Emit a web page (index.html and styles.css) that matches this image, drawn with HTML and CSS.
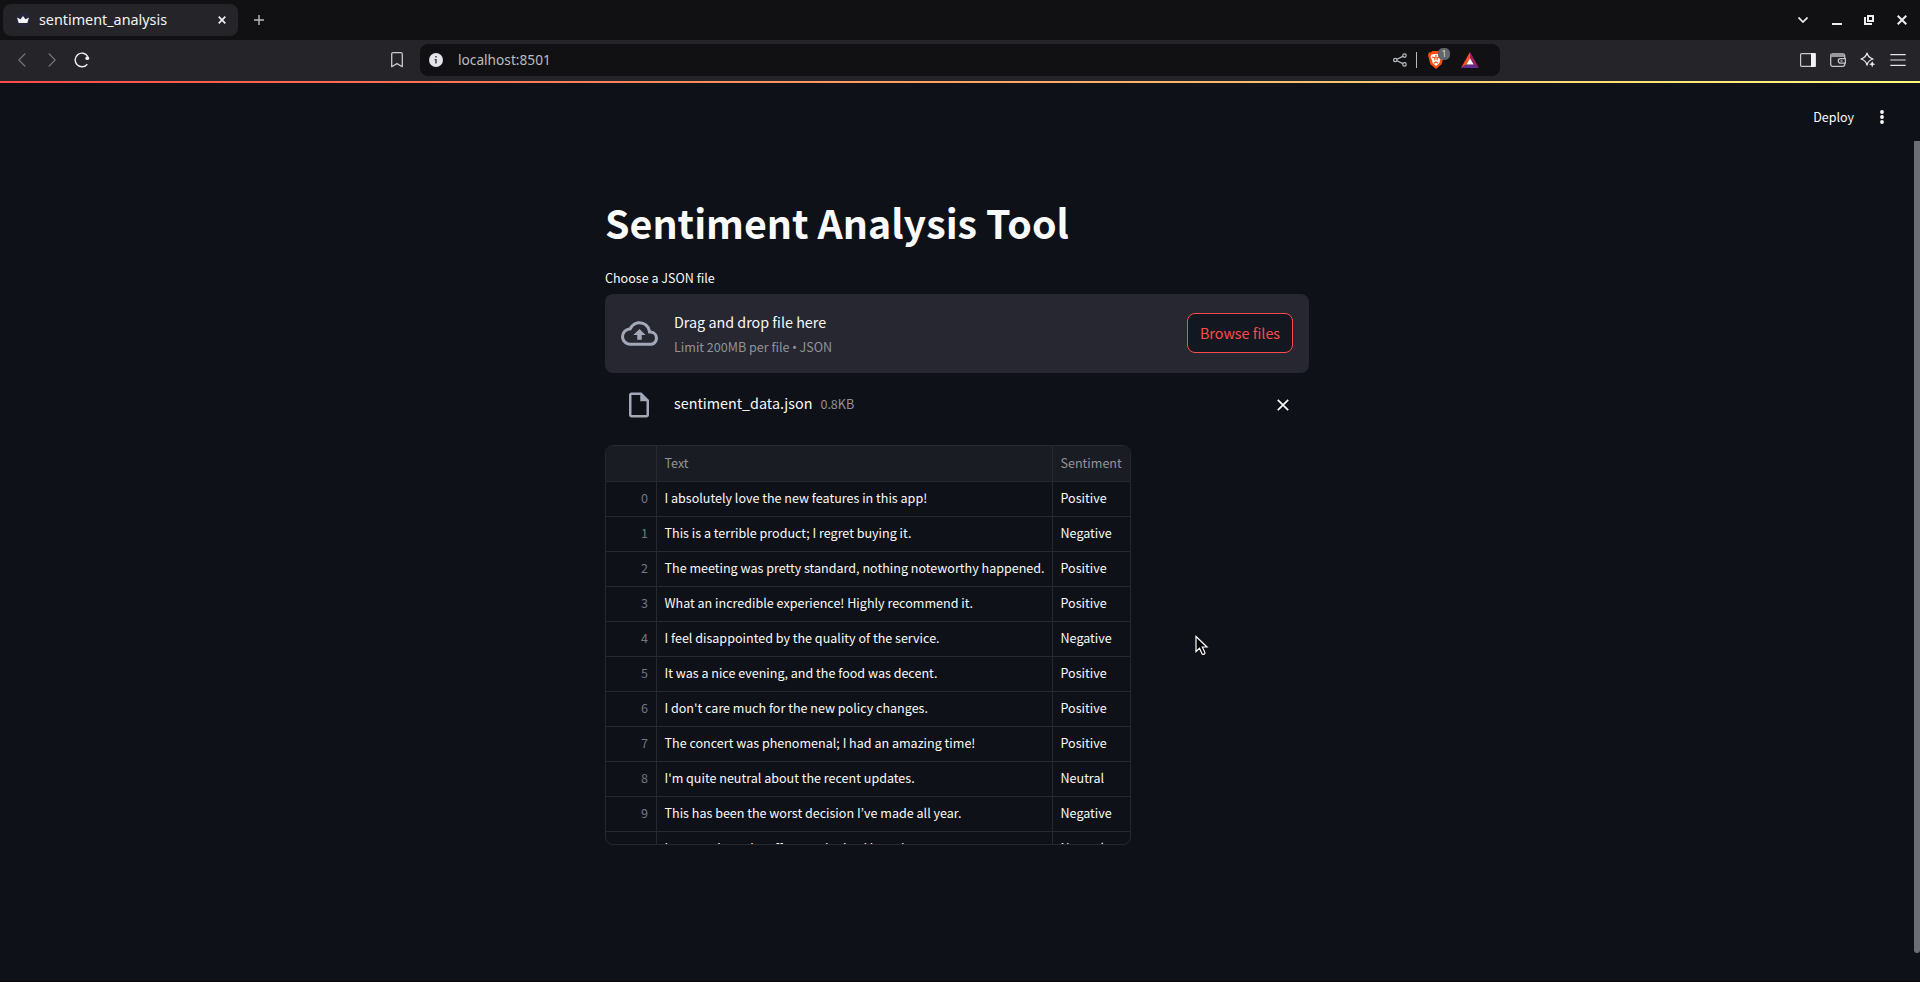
FILE: index.html
```html
<!DOCTYPE html>
<html lang="en">
<head>
<meta charset="utf-8">
<title>sentiment_analysis</title>
<link rel="stylesheet" href="styles.css">
</head>
<body>
<header class="tabstrip">
  <div class="tab">
    <svg class="tab-icon" width="16" height="16" viewBox="0 0 16 16"><circle cx="8" cy="8" r="7.500" fill="#25263a"/><path d="M2 5.500l3.500 1.700L8 4l2.500 3.200L14 5.500 12.300 11H3.700z" fill="#f4f4f4"/></svg>
    <span class="tab-title">sentiment_analysis</span>
    <svg width="8" height="8" viewBox="0 0 8 8" stroke="#eee" stroke-width="1.700"><path d="M.7.7l6.600 6.600M7.300.7L.7 7.300"/></svg>
  </div>
  <svg class="plus" width="10" height="10" viewBox="0 0 10 10" stroke="#bbb" stroke-width="1.400"><path d="M5 0v10M0 5h10"/></svg>
  <div class="window-controls">
    <svg width="10" height="6" viewBox="0 0 10 6" fill="none" stroke="#eee" stroke-width="1.700"><path d="M.5.5L5 5l4.500-4.500"/></svg>
    <svg class="minimize" width="10" height="10" viewBox="0 0 10 10" fill="#eee"><path d="M0 8h10v2H0z"/></svg>
    <svg width="10" height="10" viewBox="0 0 10 10" fill="none" stroke="#eee" stroke-width="2"><path d="M4 1h5v5H4zM1 2v7h7"/></svg>
    <svg width="10" height="10" viewBox="0 0 10 10" stroke="#eee" stroke-width="2"><path d="M.7.7l8.600 8.600M9.300.7L.7 9.300"/></svg>
  </div>
</header>
<nav class="toolbar">
  <div class="nav-buttons">
    <svg width="8" height="14" viewBox="0 0 8 14" fill="none" stroke="#74747a" stroke-width="1.200"><path d="M7.300.5L.8 7l6.500 6.500"/></svg>
    <svg class="forward" width="8" height="14" viewBox="0 0 8 14" fill="none" stroke="#74747a" stroke-width="1.200"><path d="M.7.5L7.200 7 .7 13.500"/></svg>
    <svg width="16" height="16" viewBox="0 0 16 16" fill="none" stroke="#f0f0f2" stroke-width="1.400"><path d="M13.300 12.200A6.800 6.800 0 1 1 13.800 4.500"/><circle cx="13.300" cy="6.200" r="1.900" fill="#f0f0f2" stroke="none"/></svg>
  </div>
  <svg class="bookmark" width="12" height="16" viewBox="0 0 12 16" fill="none" stroke="#c9c9cd" stroke-width="1.300"><path d="M.7 2.200Q.7.7 2.200.7h7.600q1.500 0 1.500 1.500v12.500L6 11.600.7 14.700z" stroke-linejoin="round"/></svg>
  <div class="address">
    <svg width="14" height="14" viewBox="0 0 14 14"><circle cx="7" cy="7" r="7" fill="#e4e4ea"/><path d="M6.200 3h1.600v1.600H6.200zM5.500 6h2.300v4.500H6.200V7.200h-.7z" fill="#4a4a52"/></svg>
    <span class="url">localhost:8501</span>
    <div class="address-actions">
      <svg width="14" height="14" viewBox="0 0 14 14" fill="none" stroke="#b9bdc2" stroke-width="1.200"><circle cx="2.300" cy="7" r="1.700"/><circle cx="11.500" cy="2.600" r="1.700"/><circle cx="11.500" cy="11.400" r="1.700"/><path d="M3.900 6.300l6-2.900M3.900 7.700l6 2.900"/></svg>
      <i class="divider"></i>
      <div class="shield">
        <svg width="16" height="18" viewBox="0 0 16 18"><path d="M4 0h8l1 1.500 2-.2 1 3-.8 3-1.600 6L8 18l-5.600-4.700-1.600-6L0 4.300l1-3 2 .2z" fill="#fb4d0d"/><path d="M3.500 3.500L8 3l4.500.5 1 2.500-1.500 3-.6 3L8 15l-3.400-3L4 9 2.500 6z" fill="#fff"/><path d="M4 6l2.600.8.4 2.400M12 6l-2.600.8L9 9.200M8 4v3M5.800 12.200L8 11l2.200 1.200" stroke="#fb4d0d" stroke-width="1.200" fill="none"/></svg>
        <span class="shield-count">1</span>
      </div>
      <svg width="18" height="16" viewBox="0 0 18 16"><path d="M9 0v6.200L5.300 12.500 0 16z" fill="#ff4f24"/><path d="M9 0l9 16-5.300-3.500L9 6.200z" fill="#9e1f63"/><path d="M0 16l5.300-3.500h7.400L18 16z" fill="#662d91"/><path d="M9 6.200l3.700 6.300H5.300z" fill="#fff"/></svg>
    </div>
  </div>
  <div class="toolbar-actions">
    <svg width="16" height="14" viewBox="0 0 16 14"><rect x=".6" y=".6" width="14.800" height="12.800" rx="1" fill="none" stroke="#c8c8cc" stroke-width="1.200"/><path d="M11 0h4.500v14H11z" fill="#f2f2f6"/></svg>
    <svg width="16" height="14" viewBox="0 0 16 14" fill="none" stroke="#c4c4c7" stroke-width="1.300"><rect x=".7" y=".8" width="14" height="12.500" rx="2"/><path d="M1 1.300h12.500v2H1z" fill="#999" stroke="#999"/><path d="M15.400 5.700h-4.900a2.200 2.200 0 0 0 0 4.400h4.900z" fill="#252529"/><path d="M10.500 8h2"/></svg>
    <svg width="16" height="16" viewBox="0 0 16 16"><path d="M7 1.200c.9 3.500 2.200 4.700 6 5.800-3.800 1.100-5.100 2.300-6 6-.9-3.700-2.200-4.900-6-6 3.800-1.100 5.100-2.300 6-5.800z" fill="none" stroke="#eee" stroke-width="1.300" stroke-linejoin="round"/><path d="M12.200 9l.9 2.300 2.300.9-2.300.9-.9 2.400-.9-2.400-2.300-.9 2.300-.9z" fill="#eee"/></svg>
    <svg width="16" height="12" viewBox="0 0 16 12" fill="#e4e4e6"><path d="M.3 0h15.400v1.200H.3zM.3 5.400h15.400v1.200H.3zM.3 10.800h15.400V12H.3z"/></svg>
  </div>
</nav>
<div class="rainbow"></div>
<div class="app">
  <div class="app-header">
    <span class="deploy">Deploy</span>
    <svg width="4" height="14" viewBox="0 0 4 14" fill="#fafafa"><circle cx="2" cy="2" r="1.900"/><circle cx="2" cy="7" r="1.900"/><circle cx="2" cy="12" r="1.900"/></svg>
  </div>
  <main class="content">
    <h1 class="title"><span class="heading-text">Sentiment Analysis Tool</span></h1>
    <label class="label">Choose a JSON file</label>
    <section class="dropzone">
      <svg class="cloud" width="37" height="37" viewBox="0 0 24 24" fill="#a3a8b8"><path d="M19.350 10.040A7.490 7.490 0 0 0 12 4C9.110 4 6.600 5.640 5.350 8.040A5.994 5.994 0 0 0 0 14c0 3.310 2.690 6 6 6h13c2.760 0 5-2.240 5-5 0-2.640-2.050-4.780-4.650-4.960zM19 18H6c-2.210 0-4-1.790-4-4 0-2.050 1.530-3.760 3.560-3.970l1.070-.11.5-.95A5.469 5.469 0 0 1 12 6c2.620 0 4.880 1.860 5.390 4.430l.3 1.500 1.530.11A2.980 2.980 0 0 1 22 15c0 1.650-1.350 3-3 3zM8 13h2.550v3h2.900v-3H16l-4-4z"/></svg>
      <div class="drop-text">
        <span class="drop-main">Drag and drop file here</span>
        <span class="small drop-limit">Limit 200MB per file <b class="bullet">•</b> JSON</span>
      </div>
      <button class="browse">Browse files</button>
    </section>
    <div class="file">
      <svg width="30" height="30" viewBox="0 0 24 24" fill="#a3a8b8"><path d="M14 2H6c-1.100 0-1.990.9-1.990 2L4 20c0 1.100.89 2 1.990 2H18c1.100 0 2-.9 2-2V8l-6-6zM6 20V4h7v5h5v11H6z"/></svg>
      <span class="file-name">sentiment_data.json</span>
      <span class="small file-size">0.8KB</span>
      <svg class="remove" width="12" height="12" viewBox="0 0 12 12" stroke="#fafafa" stroke-width="1.700"><path d="M.8.8l10.400 10.400M11.200.8L.8 11.200"/></svg>
    </div>
    <div class="grid">
      <div class="row head"><span class="index"></span><span class="text">Text</span><span class="mood">Sentiment</span></div>
      <div class="row"><span class="index">0</span><span class="text">I absolutely love the new features in this app!</span><span class="mood">Positive</span></div>
      <div class="row"><span class="index">1</span><span class="text">This is a terrible product; I regret buying it.</span><span class="mood">Negative</span></div>
      <div class="row"><span class="index">2</span><span class="text">The meeting was pretty standard, nothing noteworthy happened.</span><span class="mood">Positive</span></div>
      <div class="row"><span class="index">3</span><span class="text">What an incredible experience! Highly recommend it.</span><span class="mood">Positive</span></div>
      <div class="row"><span class="index">4</span><span class="text">I feel disappointed by the quality of the service.</span><span class="mood">Negative</span></div>
      <div class="row"><span class="index">5</span><span class="text">It was a nice evening, and the food was decent.</span><span class="mood">Positive</span></div>
      <div class="row"><span class="index">6</span><span class="text">I don't care much for the new policy changes.</span><span class="mood">Positive</span></div>
      <div class="row"><span class="index">7</span><span class="text">The concert was phenomenal; I had an amazing time!</span><span class="mood">Positive</span></div>
      <div class="row"><span class="index">8</span><span class="text">I'm quite neutral about the recent updates.</span><span class="mood">Neutral</span></div>
      <div class="row"><span class="index">9</span><span class="text">This has been the worst decision I’ve made all year.</span><span class="mood">Negative</span></div>
      <div class="row"><span class="index">10</span><span class="text">I can see how the effort, and raised brand.</span><span class="mood">Neutral</span></div>
    </div>
  </main>
  <div class="scrollbar"></div>
  <svg class="cursor" width="14" height="22" viewBox="0 0 14 22"><path d="M1 1.500v15l3.500-3.300 2.600 5.600q1.200 1.300 2.600 0 .5-.8 0-1.700L7.300 12H12z" fill="#000" stroke="#fff" stroke-width="1.200"/></svg>
</div>
</body>
</html>
```
FILE: styles.css
```css
* { box-sizing: border-box; }
body { margin: 0; height: 982px; overflow: hidden; background: #0e1117; color: #fafafa; font-family: "Noto Sans CJK KR", "Noto Sans", sans-serif; font-size: 14px; }
svg { flex: none; display: block; }
span { white-space: nowrap; }

.tabstrip { height: 40px; display: flex; align-items: center; padding: 0 13px 0 3px; background: #111113; font-family: "Noto Sans", sans-serif; }
.tab { width: 235px; height: 32px; border-radius: 8px; background: #252529; display: flex; align-items: center; padding: 0 12px; }
.tab-title { flex: 1; margin-left: 8px; padding-bottom: 1px; font-size: 14.350px; color: #f4f4f4; }
.plus { margin-left: 16px; }
.window-controls { margin-left: auto; display: flex; align-items: center; gap: 23px; }
.minimize { margin: 0 -1px 0 1px; }

.toolbar { height: 41px; display: flex; align-items: center; padding: 0 14px 1px 18px; background: #252529; }
.nav-buttons { display: flex; align-items: center; gap: 18px; }
.forward { margin-left: 4px; }
.bookmark { margin-left: 301px; }
.address { width: 1080px; height: 32px; margin-left: 17px; border-radius: 8px; background: #111113; display: flex; align-items: center; padding: 0 21px 0 9px; font-family: "Noto Sans", sans-serif; }
.url { margin-left: 15px; padding-bottom: 1px; font-size: 13.700px; color: #bcbcc0; }
.address-actions { margin-left: auto; display: flex; align-items: center; }
.divider { width: 1px; height: 16px; margin: 0 11px 0 9px; background: #b9b9bc; }
.shield { position: relative; margin-right: 17px; }
.shield-count { position: absolute; left: 10px; top: -3px; width: 12px; height: 12px; border-radius: 5px; background: #62646f; color: #d5d5dc; font-size: 9px; line-height: 12px; text-align: center; }
.toolbar-actions { margin-left: auto; display: flex; align-items: center; gap: 14px; }

.rainbow { height: 2px; background: linear-gradient(90deg, #ff4b4b, #fffd80); }
.app { position: relative; height: 899px; border-bottom: 1px solid #050507; }
.app-header { height: 58px; padding: 10px 36px 0 0; display: flex; justify-content: flex-end; align-items: center; }
.deploy { margin-right: 26px; font-size: 12.500px; line-height: 20px; }
.content { width: 704px; margin-left: 605px; padding-top: 54px; }
.title { margin: 0; height: 53px; font-size: 39.350px; line-height: 53px; font-weight: 700; }
.label { display: block; margin-top: 19px; height: 27px; font-size: 12.550px; line-height: 22px; }
.dropzone { height: 79px; border-radius: 8px; background: #262730; display: flex; align-items: center; padding: 0 16px 1px; }
.drop-text { margin-left: 16px; padding-top: 1px; display: flex; flex-direction: column; gap: 3px; }
.drop-main, .file-name { font-size: 14.330px; line-height: 24px; }
.small { font-size: 12.550px; line-height: 20px; color: #929399; }
.bullet { font: 12px "Noto Sans", sans-serif; line-height: 1; }
.browse { margin-left: auto; width: 106px; height: 40px; padding: 0 0 2px; border: 1px solid #ff4b4b; border-radius: 8px; background: #131720; color: #ff4b4b; font: 14.330px "Noto Sans CJK KR", sans-serif; }
.file { height: 64px; display: flex; align-items: center; padding: 0 20px 1px 19px; }
.file-name { margin: 0 8px 0 20px; padding-bottom: 3px; }
.file-size { padding-bottom: 2px; }
.remove { margin-left: auto; }

.grid { width: 526px; height: 400px; margin-top: 8px; border: 1px solid #262930; border-radius: 8px; overflow: hidden; font-size: 12.550px; }
.row { height: 35px; display: flex; line-height: 31px; border-bottom: 1px solid #262930; }
.head { height: 36px; line-height: 34px; background: #1a1c24; color: #929399; }
.index { width: 51px; padding-right: 8px; text-align: right; color: #75777d; border-right: 1px solid #262930; }
.text { width: 396px; padding-left: 7.500px; border-right: 1px solid #262930; }
.mood { padding-left: 7.500px; }

.scrollbar { position: absolute; right: 0; top: 58px; width: 6px; height: 812px; background: #6d6e72; border-radius: 0 0 3px 3px; }
.cursor { position: absolute; left: 1195px; top: 552px; }
```
